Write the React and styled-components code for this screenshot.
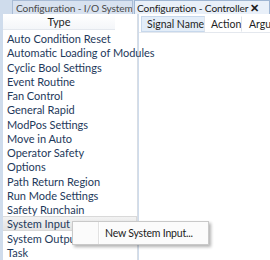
import React from 'react';
import styled, { createGlobalStyle } from 'styled-components';

const Global = createGlobalStyle`
  html, body { margin: 0; padding: 0; }
  body {
    font-family: Lato, "Open Sans", sans-serif;
    background: #cfdcec;
  }
`;

const types = [
  'Auto Condition Reset',
  'Automatic Loading of Modules',
  'Cyclic Bool Settings',
  'Event Routine',
  'Fan Control',
  'General Rapid',
  'ModPos Settings',
  'Move in Auto',
  'Operator Safety',
  'Options',
  'Path Return Region',
  'Run Mode Settings',
  'Safety Runchain',
  'System Input',
  'System Output',
  'Task',
];

const Screen = styled.div`
  width: 270px;
  height: 260px;
  overflow: hidden;
  display: flex;
  flex-direction: column;
  background: #cfdcec;
`;

const TabStrip = styled.div`
  height: 14px;
  display: flex;
  padding-left: 12px;
  gap: 1px;
`;

const Tab = styled.div`
  height: 14px;
  box-sizing: border-box;
  display: flex;
  align-items: center;
  overflow: hidden;
  padding: 0 0 0 ${(p) => p.$pad}px;
  font-size: 10.2px;
  letter-spacing: -0.15px;
  white-space: nowrap;
  border: 1px solid ${(p) => (p.$active ? '#9fb6d3' : '#a9bcd6')};
  border-bottom: none;
  background: ${(p) => (p.$active ? '#e9f0f9' : '#d8e2f0')};
  color: ${(p) => (p.$active ? '#1b1b1b' : '#4a4a4a')};
  width: ${(p) => p.$w}px;
  flex-shrink: 0;
`;

const Close = styled.span`
  font-size: 11px;
  font-weight: bold;
  color: #1b1b1b;
  margin-left: 2px;
`;

const Body = styled.div`
  flex: 1;
  display: flex;
`;

const LeftPanel = styled.div`
  width: 134px;
  margin-left: 3px;
  background: #fff;
  border-right: 1px solid #d8dde4;
  display: flex;
  flex-direction: column;
`;

const ColHeader = styled.div`
  height: 15px;
  width: 112px;
  display: flex;
  align-items: center;
  justify-content: center;
  font-size: 11px;
  color: #1e1e1e;
  border-bottom: 1px solid #e4e8ee;
  background: linear-gradient(#ffffff, #f4f6f9);
`;

const List = styled.div`
  padding-top: 1px;
  display: flex;
  flex-direction: column;
`;

const Item = styled.div`
  height: 14.25px;
  line-height: 13px;
  box-sizing: border-box;
  padding-left: 4px;
  font-size: 11px;
  color: #1e395b;
  white-space: nowrap;
  border: 1px solid ${(p) => (p.$selected ? '#d9d9d9' : 'transparent')};
  border-left: none;
  background: ${(p) => (p.$selected ? 'linear-gradient(#f2f2f2, #e4e4e4)' : 'transparent')};
  position: relative;
`;

const RightPanel = styled.div`
  flex: 1;
  background: #fff;
  margin-left: 1px;
  display: flex;
  flex-direction: column;
`;

const GridHeader = styled.div`
  display: flex;
  height: 16px;
  margin-top: 2px;
  padding-left: 2px;
  border-bottom: 1px solid #e4e8ee;
`;

const GridCol = styled.div`
  width: ${(p) => p.$w}px;
  flex-shrink: 0;
  box-sizing: border-box;
  padding-left: ${(p) => p.$pad}px;
  font-size: 10.5px;
  line-height: 14px;
  color: #1e1e1e;
  white-space: nowrap;
  overflow: hidden;
  border: 1px solid ${(p) => (p.$hover ? '#c7d8ec' : 'transparent')};
  border-right: 1px solid #dfe4ea;
  background: ${(p) => (p.$hover ? '#e3edf8' : 'transparent')};
`;

const Menu = styled.div`
  position: absolute;
  left: 69px;
  top: 4px;
  width: 137px;
  height: 24px;
  box-sizing: border-box;
  background: #fbfbfb;
  border: 1px solid #c9c9c9;
  box-shadow: 2px 2px 3px rgba(0, 0, 0, 0.3);
  display: flex;
  z-index: 2;
`;

const MenuGutter = styled.div`
  width: 25px;
  border-right: 1px solid #e2e2e2;
  box-shadow: 1px 0 0 #ffffff;
`;

const MenuLabel = styled.div`
  padding-left: 6px;
  display: flex;
  align-items: center;
  font-size: 10.5px;
  letter-spacing: -0.2px;
  color: #1b1b1b;
  white-space: nowrap;
`;

export default function App() {
  return (
    <Screen>
      <Global />
      <TabStrip>
        <Tab $w={121} $pad={3}>Configuration - I/O System</Tab>
        <Tab $w={136} $pad={2} $active>
          Configuration - Controller <Close>✕</Close>
        </Tab>
      </TabStrip>
      <Body>
        <LeftPanel>
          <ColHeader>Type</ColHeader>
          <List>
            {types.map((t) => (
              <Item key={t} $selected={t === 'System Input'}>
                {t}
                {t === 'System Input' && (
                  <Menu>
                    <MenuGutter />
                    <MenuLabel>New System Input...</MenuLabel>
                  </Menu>
                )}
              </Item>
            ))}
          </List>
        </LeftPanel>
        <RightPanel>
          <GridHeader>
            <GridCol $w={64} $pad={5} $hover>Signal Name</GridCol>
            <GridCol $w={37} $pad={5}>Action</GridCol>
            <GridCol $w={40} $pad={6}>Arguments</GridCol>
          </GridHeader>
        </RightPanel>
      </Body>
    </Screen>
  );
}
